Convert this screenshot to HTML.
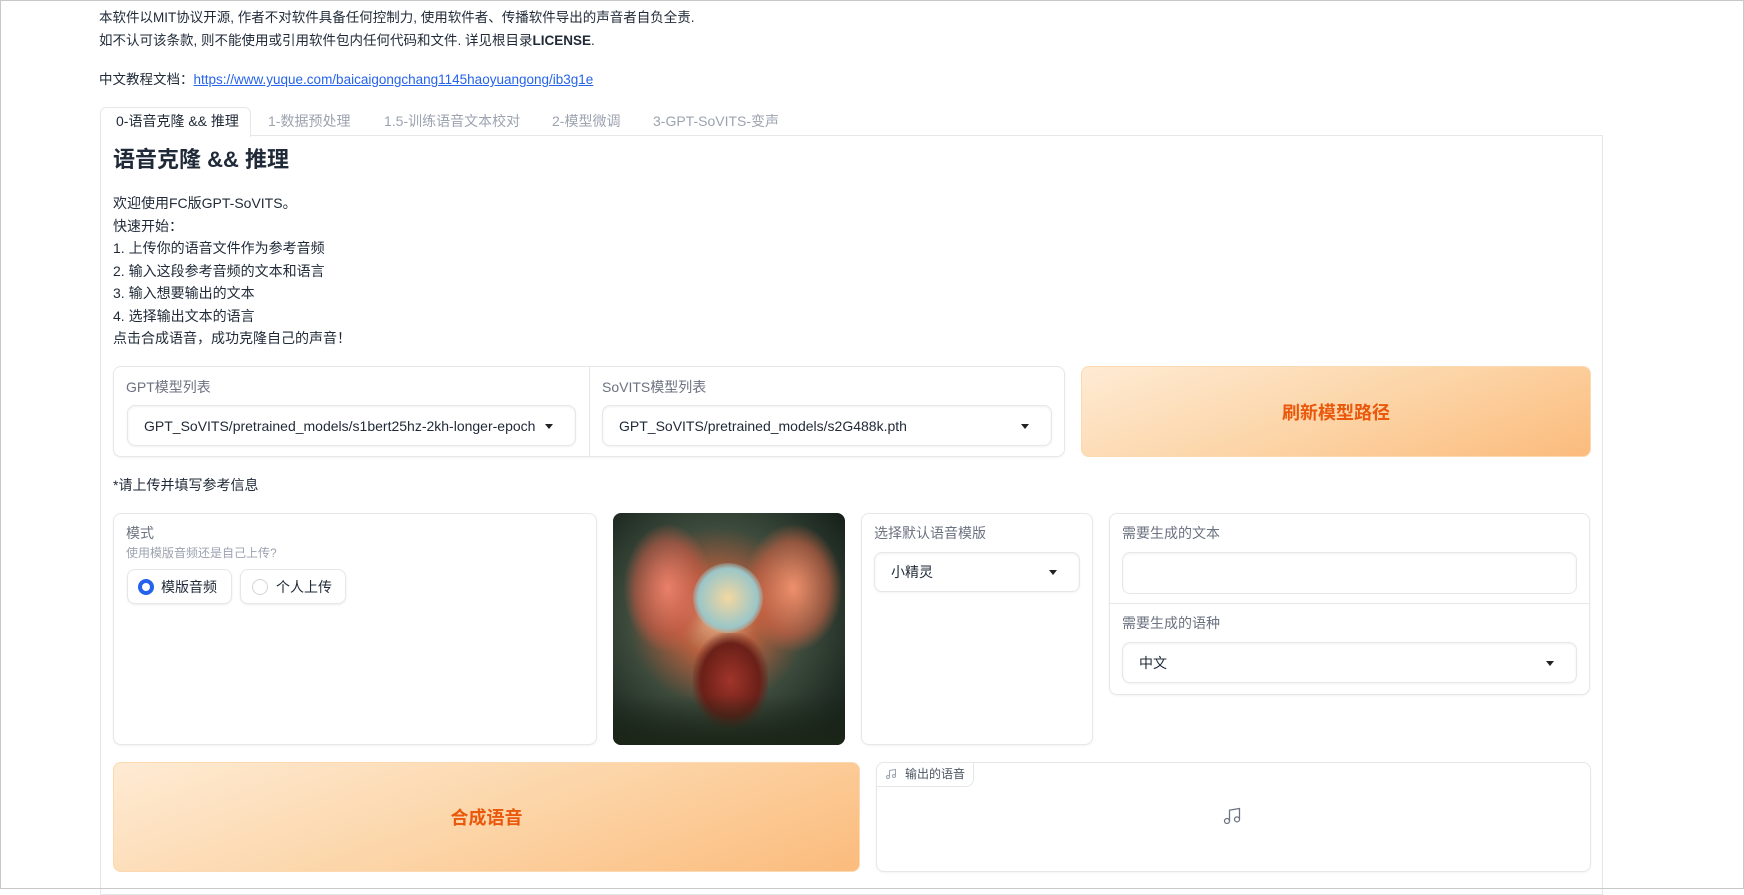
<!DOCTYPE html>
<html><head><meta charset="utf-8"><style>
*{box-sizing:border-box;margin:0;padding:0}
body{width:1744px;height:889px;overflow:hidden;background:#fff;font-family:"Liberation Sans","Noto Sans CJK SC",sans-serif;color:#1f2937;font-size:14px;position:relative}
.frame{position:absolute;left:0;top:0;width:1744px;height:889px;border:1px solid #c8c8c8;z-index:5;pointer-events:none}
.a{position:absolute;white-space:nowrap}
.box{position:absolute;border:1px solid #e5e7eb;border-radius:8px;background:#fff;box-shadow:0 1px 2px rgba(0,0,0,.05)}
.lbl{position:absolute;color:#6b7280;font-size:14px;white-space:nowrap}
.dd{position:absolute;border:1px solid #e5e7eb;border-radius:8px;background:#fff;box-shadow:0 1px 2px rgba(0,0,0,.06) inset,0 1px 2px rgba(0,0,0,.05);font-size:14px;color:#1f2937;padding-left:16px;display:flex;align-items:center;overflow:hidden;white-space:nowrap}
.dd:after{content:"";position:absolute;right:22px;top:50%;margin-top:-2px;border:4px solid transparent;border-top:5px solid #222;border-bottom:0}
.btn{position:absolute;border:1px solid #fcd9b0;border-radius:8px;background:linear-gradient(160deg,#feebd4 0%,#fcd3a4 55%,#fbbb7c 100%);color:#ea580c;font-size:18px;font-weight:bold;display:flex;align-items:center;justify-content:center}
.tab{position:absolute;top:107px;height:28px;line-height:28px;font-size:14px;color:#9ca3af;white-space:nowrap}
</style></head><body>
<div class="frame"></div>
<div class="a" style="left:99px;top:8px;line-height:20px;font-size:13.5px">本软件以MIT协议开源, 作者不对软件具备任何控制力, 使用软件者、传播软件导出的声音者自负全责.</div>
<div class="a" style="left:99px;top:31px;line-height:20px;font-size:13.5px">如不认可该条款, 则不能使用或引用软件包内任何代码和文件. 详见根目录<b>LICENSE</b>.</div>
<div class="a" style="left:99px;top:70px;line-height:20px;font-size:13.5px">中文教程文档：<span style="color:#2563eb;text-decoration:underline">https://www.yuque.com/baicaigongchang1145haoyuangong/ib3g1e</span></div>

<div style="position:absolute;left:100px;top:135px;width:1503px;height:760px;border:1px solid #e5e7eb"></div>
<div style="position:absolute;left:100px;top:107px;width:151px;height:30px;border:1px solid #e5e7eb;border-bottom:none;border-radius:6px 6px 0 0;background:#fff"></div>
<div class="tab" style="left:116px;color:#1f2937">0-语音克隆 &amp;&amp; 推理</div>
<div class="tab" style="left:268px">1-数据预处理</div>
<div class="tab" style="left:384px">1.5-训练语音文本校对</div>
<div class="tab" style="left:552px">2-模型微调</div>
<div class="tab" style="left:653px">3-GPT-SoVITS-变声</div>

<div class="a" style="left:113px;top:146px;font-size:22px;font-weight:bold;line-height:28px">语音克隆 &amp;&amp; 推理</div>
<div class="a" style="left:113px;top:192px;line-height:22.5px">欢迎使用FC版GPT-SoVITS。<br>快速开始：<br>1. 上传你的语音文件作为参考音频<br>2. 输入这段参考音频的文本和语言<br>3. 输入想要输出的文本<br>4. 选择输出文本的语言<br>点击合成语音，成功克隆自己的声音！</div>

<div class="box" style="left:113px;top:366px;width:952px;height:91px"></div>
<div style="position:absolute;left:589px;top:367px;width:1px;height:89px;background:#e5e7eb"></div>
<div class="lbl" style="left:126px;top:377px">GPT模型列表</div>
<div class="lbl" style="left:602px;top:377px">SoVITS模型列表</div>
<div class="dd" style="left:127px;top:405px;width:449px;height:41px"><span style="width:392px;overflow:hidden;display:block;white-space:nowrap">GPT_SoVITS/pretrained_models/s1bert25hz-2kh-longer-epoch=68e-step=50232.ckpt</span></div>
<div class="dd" style="left:602px;top:405px;width:450px;height:41px">GPT_SoVITS/pretrained_models/s2G488k.pth</div>
<div class="btn" style="left:1081px;top:366px;width:510px;height:91px">刷新模型路径</div>

<div class="a" style="left:113px;top:475px;line-height:20px">*请上传并填写参考信息</div>

<div class="box" style="left:113px;top:513px;width:484px;height:232px"></div>
<div class="lbl" style="left:126px;top:523px">模式</div>
<div class="lbl" style="left:126px;top:544px;font-size:12px;color:#9ca3af">使用模版音频还是自己上传?</div>
<div class="box" style="left:127px;top:569px;width:105px;height:35px;box-shadow:0 1px 2px rgba(0,0,0,.08)"></div>
<div style="position:absolute;left:138px;top:579px;width:16px;height:16px;border-radius:50%;background:#fff;border:4px solid #2563eb"></div>
<div class="a" style="left:161px;top:577px;font-size:14px">模版音频</div>
<div class="box" style="left:240px;top:569px;width:106px;height:35px;box-shadow:0 1px 2px rgba(0,0,0,.08)"></div>
<div style="position:absolute;left:252px;top:579px;width:16px;height:16px;border-radius:50%;border:1px solid #d1d5db"></div>
<div class="a" style="left:276px;top:577px;font-size:14px">个人上传</div>

<div style="position:absolute;left:613px;top:513px;width:232px;height:232px;border-radius:8px;overflow:hidden;background:radial-gradient(ellipse at 45% 45%,#e9b38a 0%,#b5603f 22%,#3c4a3c 50%,#1e2a22 80%,#101612 100%)">
<div style="position:absolute;left:10px;top:10px;width:90px;height:130px;background:radial-gradient(ellipse,#e9806a 0%,rgba(200,90,70,.6) 50%,transparent 70%)"></div>
<div style="position:absolute;left:130px;top:10px;width:100px;height:130px;background:radial-gradient(ellipse,#f0906c 0%,rgba(210,100,70,.6) 50%,transparent 70%)"></div>
<div style="position:absolute;left:80px;top:50px;width:70px;height:70px;border-radius:50%;background:radial-gradient(circle,#f3d7a0 0%,#9bc6c8 60%,transparent 75%)"></div>
<div style="position:absolute;left:80px;top:120px;width:75px;height:95px;background:radial-gradient(ellipse,#a0342a 0%,#6a2018 55%,transparent 75%)"></div>
<div style="position:absolute;left:0;bottom:0;width:232px;height:50px;background:linear-gradient(180deg,transparent,#1b2618)"></div>
</div>

<div class="box" style="left:861px;top:513px;width:232px;height:232px"></div>
<div class="lbl" style="left:874px;top:523px">选择默认语音模版</div>
<div class="dd" style="left:874px;top:552px;width:206px;height:40px">小精灵</div>

<div class="box" style="left:1109px;top:513px;width:481px;height:182px"></div>
<div class="lbl" style="left:1122px;top:523px">需要生成的文本</div>
<div style="position:absolute;left:1122px;top:552px;width:455px;height:42px;border:1px solid #e5e7eb;border-radius:8px;box-shadow:0 1px 2px rgba(0,0,0,.06) inset"></div>
<div style="position:absolute;left:1110px;top:603px;width:479px;height:1px;background:#e5e7eb"></div>
<div class="lbl" style="left:1122px;top:613px">需要生成的语种</div>
<div class="dd" style="left:1122px;top:642px;width:455px;height:41px">中文</div>

<div class="btn" style="left:113px;top:762px;width:747px;height:110px">合成语音</div>

<div class="box" style="left:876px;top:762px;width:715px;height:110px"></div>
<div style="position:absolute;left:876px;top:762px;width:98px;height:25px;border:1px solid #e5e7eb;border-radius:8px 0 8px 0;background:#fff;font-size:12px;color:#4b5563;line-height:23px;padding-left:28px;white-space:nowrap">输出的语音</div>
<svg style="position:absolute;left:885px;top:768px" width="12" height="12" viewBox="0 0 24 24" fill="none" stroke="#9ca3af" stroke-width="2"><path d="M9 18V5l12-2v13"/><circle cx="6" cy="18" r="3"/><circle cx="18" cy="16" r="3"/></svg>
<svg style="position:absolute;left:1222px;top:806px" width="20" height="20" viewBox="0 0 24 24" fill="none" stroke="#6b7280" stroke-width="1.5"><path d="M9 18V5l12-2v13"/><circle cx="6" cy="18" r="3"/><circle cx="18" cy="16" r="3"/></svg>
</body></html>
